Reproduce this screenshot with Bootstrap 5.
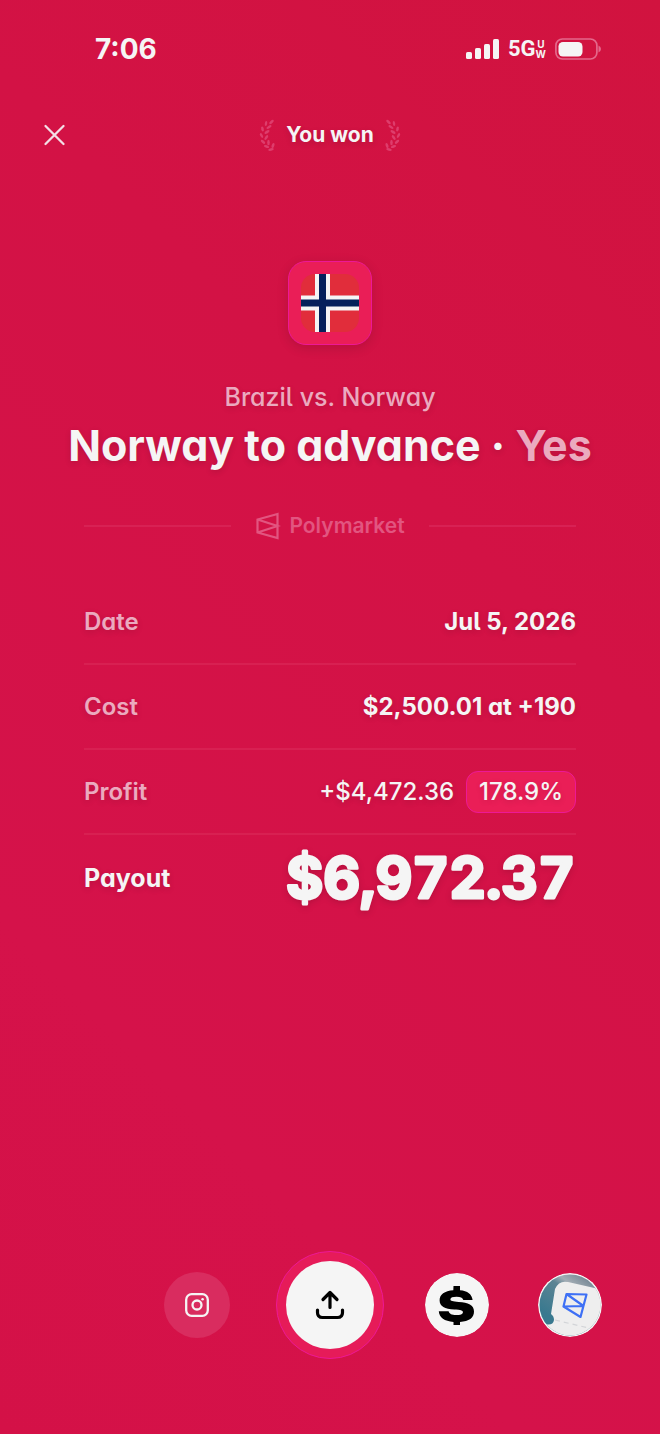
<!DOCTYPE html>
<html lang="en">
<head>
<meta charset="utf-8">
<meta name="viewport" content="width=device-width, initial-scale=1">
<title>You won</title>
<link href="https://cdn.jsdelivr.net/npm/bootstrap@5.3.0/dist/css/bootstrap.min.css" rel="stylesheet">
<style>
:root { --paper: #f5f5f5; --soft: #ebaabf; --hot: #ea1e57; --edge: #ed1896; }
body {
  font-family: Inter, "Liberation Sans", sans-serif;
  color: var(--paper);
  background: linear-gradient(225deg, #d1133f 0%, #d31245 35%, #d5124a 75%, #d41147 100%) no-repeat;
  font-size: 24px; line-height: 32px;
}
svg { display: block; flex: none; }
.alt-a { font-feature-settings: "cv11", "cv05"; }
.status-bar { padding: 33px 58px 0 95px; }
.clock { font-size: 28px; }
.network { font-size: 22px; font-family: "Roboto", Inter, sans-serif; }
.network-sub { font-size: 10px; line-height: 10px; }
.top-bar { grid-template-columns: 1fr auto 1fr; padding: 53px 40px 0; }
.close-btn { width: 28px; height: 28px; }
.bare { background: none; border: 0; padding: 0; color: inherit; }
.won { gap: 11px; }
.won-title { font-size: 21px; }
.flag-tile {
  width: 84px; height: 84px; border-radius: 18px; background: var(--hot);
  border: 1px solid var(--edge); margin-top: 109px; box-shadow: 0 3px 12px #0002;
}
.flag-tile svg { border-radius: 14px; }
.shade { text-shadow: 0 2px 6px #0002; }
.soft { color: var(--soft); }
.match-name { font-size: 25px; margin-top: 36px; }
.headline { font-size: 43px; line-height: 56px; margin: 4px 0 0; }
.receipt { padding: 0 84px; }
.brand-row { margin-top: 37px; gap: 24px; color: #e25580; font-size: 21px; }
.rule { height: 2px; background: #d82154; }
.receipt-list { padding-top: 38px; }
.receipt-row { min-height: 85px; border-bottom: 2px solid #d82052; margin: 0; }
.receipt-row:last-child { border-bottom: 0; }
.receipt-row dt { font-weight: 600; }
.receipt-row .payout-label { font-size: 25px; font-weight: 700; }
.profit-pill {
  background: var(--hot); border: 1px solid var(--edge); border-radius: 12px;
  padding: 4px 12px; margin-left: 12px;
}
.payout-sum { font-size: 57px; font-weight: 700; font-feature-settings: "tnum"; text-shadow: none; overflow: visible; filter: drop-shadow(0 2px 3px #0002); }
.dock { grid-template-columns: 1fr auto 1fr; padding-bottom: 75px; }
.dock-start { padding-right: 46px; }
.dock-end { padding: 0 58px 0 41px; }
.dock button { border-radius: 50%; }
.ig-btn { width: 66px; height: 66px; background: #d92c5f; }
.share-btn { width: 108px; height: 108px; background: #e61b59; border: 1px solid var(--edge); }
.share-disc { width: 88px; height: 88px; background: var(--paper); color: #000; }
.coin-btn { width: 64px; height: 64px; overflow: hidden; }
</style>
</head>
<body class="min-vh-100 d-flex flex-column">

<header>
  <div class="status-bar d-flex justify-content-between align-items-center">
    <span class="clock fw-bold">7:06</span>
    <div class="d-flex align-items-center">
      <svg width="34" height="22" viewBox="0 0 34 22" fill="#f5f5f5"><rect y="14" width="6" height="7" rx="1.6"/><rect x="9" y="10" width="6" height="11" rx="1.6"/><rect x="18" y="6" width="6" height="15" rx="1.6"/><rect x="27" y="1" width="6" height="20" rx="1.6"/></svg>
      <span class="network fw-bold ms-2">5G</span>
      <span class="network-sub fw-bold d-flex flex-column align-items-center me-2">
        <span>U</span><span>W</span>
      </span>
      <svg width="48" height="24" viewBox="0 0 48 24"><rect x="1.900" y="2" width="41" height="20" rx="6.500" fill="none" stroke="#e4688b" stroke-width="1.700"/><rect x="4.500" y="5" width="24" height="14.500" rx="4.500" fill="#f5f5f5"/><path d="M44.500 8.500q2.500 1.200 2.500 3.500t-2.500 3.500z" fill="#e4688b"/></svg>
    </div>
  </div>

  <div class="top-bar d-grid align-items-center">
    <button class="bare close-btn" type="button" aria-label="Close">
      <svg width="28" height="28" viewBox="0 0 28 28" stroke="#f3dfe6" stroke-width="2.300" stroke-linecap="round"><path d="M5.500 5 23.500 23M23.500 5 5.500 23"/></svg>
    </button>
    <div class="won d-flex align-items-center">
      <svg width="16" height="34" viewBox="0 0 16 34" fill="#de3d6c">
        <defs><g id="laurel">
          <ellipse cx="12.500" cy="4" rx="2.900" ry="1.300" transform="rotate(-45 12.500 4)"/>
          <ellipse cx="7" cy="5.500" rx="2.500" ry="1.200" transform="rotate(-80 7 5.500)"/>
          <ellipse cx="10" cy="9" rx="2.900" ry="1.300" transform="rotate(-32 10 9)"/>
          <ellipse cx="3.500" cy="11" rx="2.600" ry="1.300" transform="rotate(78 3.500 11)"/>
          <ellipse cx="8" cy="14" rx="2.800" ry="1.300" transform="rotate(-30 8 14)"/>
          <ellipse cx="2.500" cy="17.500" rx="2.600" ry="1.300" transform="rotate(62 2.500 17.500)"/>
          <ellipse cx="7.300" cy="19.500" rx="2.800" ry="1.300" transform="rotate(-55 7.300 19.500)"/>
          <ellipse cx="4" cy="23.800" rx="2.700" ry="1.300" transform="rotate(42 4 23.800)"/>
          <ellipse cx="9.500" cy="24.500" rx="2.700" ry="1.300" transform="rotate(-90 9.500 24.500)"/>
          <ellipse cx="14" cy="27.500" rx="2.700" ry="1.300" transform="rotate(-72 14 27.500)"/>
          <ellipse cx="7.500" cy="28.500" rx="2.700" ry="1.300" transform="rotate(20 7.500 28.500)"/>
          <ellipse cx="12" cy="31.500" rx="2.800" ry="1.300" transform="rotate(-10 12 31.500)"/>
        </g></defs>
        <use href="#laurel"/>
      </svg>
      <span class="won-title fw-bold shade">You won</span>
      <svg width="16" height="34" viewBox="0 0 16 34" fill="#de3d6c"><use href="#laurel" transform="matrix(-1 0 0 1 16 0)"/></svg>
    </div>
  </div>
</header>

<main>
  <div class="text-center">
    <div class="flag-tile mx-auto d-flex align-items-center justify-content-center">
      <svg width="58" height="58" viewBox="0 0 58 58" role="img" aria-label="Norway"><rect width="58" height="58" fill="#e12d3b"/><path d="M14 0h15v58H14zM0 21.500h58v15H0z" fill="#f5f5f5"/><path d="M18 0h7v58h-7zM0 25.500h58v7H0z" fill="#05205b"/></svg>
    </div>
    <p class="match-name alt-a shade soft fw-medium mb-0">Brazil vs. Norway</p>
    <h1 class="headline alt-a shade fw-bold">Norway to advance · <span class="soft">Yes</span></h1>
  </div>

  <div class="receipt">
    <div class="brand-row d-flex align-items-center fw-semibold">
      <span class="rule flex-grow-1"></span>
      <span class="d-flex align-items-center gap-2">
        <svg width="26" height="28" viewBox="0 0 26 28" fill="none" stroke="currentColor" stroke-width="2.200"><path d="M22.500 2 2.500 7.500v13L22.500 26zM2.500 7.500 22.500 14 2.500 20.500"/></svg>
        Polymarket
      </span>
      <span class="rule flex-grow-1"></span>
    </div>

    <dl class="receipt-list alt-a shade mb-0">
      <div class="receipt-row d-flex align-items-center justify-content-between">
        <dt class="soft">Date</dt><dd class="mb-0 fw-bold">Jul 5, 2026</dd>
      </div>
      <div class="receipt-row d-flex align-items-center justify-content-between">
        <dt class="soft">Cost</dt><dd class="mb-0 fw-bold">$2,500.01 at +190</dd>
      </div>
      <div class="receipt-row d-flex align-items-center justify-content-between">
        <dt class="soft">Profit</dt>
        <dd class="mb-0 d-flex align-items-center fw-medium">+$4,472.36 <span class="profit-pill">178.9%</span></dd>
      </div>
      <div class="receipt-row d-flex align-items-center justify-content-between">
        <dt class="payout-label">Payout</dt>
        <dd class="mb-0">
          <svg class="payout-sum" width="300" height="64" viewBox="0 0 300 64"><text x="299" y="52" text-anchor="end" fill="#f5f5f5" stroke="#f5f5f5" stroke-width="3" stroke-linejoin="round">$6,972.37</text></svg>
        </dd>
      </div>
    </dl>
  </div>
</main>

<footer class="dock d-grid align-items-center mt-auto">
  <div class="dock-start d-flex justify-content-end">
    <button class="bare ig-btn d-flex align-items-center justify-content-center" type="button" aria-label="Share to Instagram">
      <svg width="24" height="24" viewBox="0 0 24 24" fill="none" stroke="#f5f5f5" stroke-width="2.300"><rect x="1.200" y="1.200" width="21.600" height="21.600" rx="5.500"/><circle cx="12" cy="12" r="4.500"/><circle cx="17.600" cy="6.300" r="1.300" fill="#f5f5f5" stroke="none"/></svg>
    </button>
  </div>
  <button class="share-btn p-0 d-flex align-items-center justify-content-center" type="button" aria-label="Share">
    <span class="share-disc rounded-circle d-flex align-items-center justify-content-center">
      <svg width="30" height="30" viewBox="0 0 30 30" fill="none" stroke="#000" stroke-width="3.200" stroke-linecap="round" stroke-linejoin="round"><path d="M15 17.500V2.500M8 9.500l7-7 7 7M2.500 20v2.500q0 5 5 5h15q5 0 5-5V20"/></svg>
    </span>
  </button>
  <div class="dock-end d-flex justify-content-between">
    <button class="bare coin-btn" type="button" aria-label="Cash">
      <svg width="64" height="64" viewBox="0 0 64 64"><circle cx="32" cy="32" r="32" fill="#f5f5f5"/><path d="M28.500 13h6.500v4.200c7.500.6 12 4 12.600 9.800h-9.300c-.7-2.400-2.800-3.200-6.700-3.200-4 0-6.200.8-6.200 2.500 0 1.900 2.300 2.200 8.300 2.600 9.500.6 15.300 2.800 15.300 9.600 0 6.500-5 9.800-14 10.400V52h-6.500v-3.100c-9-.6-14.300-4.100-14.700-10.600h9.800c.9 2.600 3 3.800 7.500 3.800 4.200 0 6.800-.8 6.800-2.800s-2.100-2.400-8.500-2.800c-9.700-.6-14.800-2.900-14.800-9.300 0-5.800 5-9.400 13.700-10z"/></svg>
    </button>
    <button class="bare coin-btn" type="button" aria-label="Polymarket profile">
      <svg width="64" height="64" viewBox="0 0 64 64">
        <defs>
          <clipPath id="disc"><circle cx="32" cy="32" r="30.500"/></clipPath>
          <linearGradient id="sky" x1="0" y1="1" x2=".7" y2="0"><stop offset=".3" stop-color="#39798f"/><stop offset=".7" stop-color="#5c8494"/><stop offset=".8" stop-color="#a3adb5"/><stop offset="1" stop-color="#708390"/></linearGradient>
        </defs>
        <circle cx="32" cy="32" r="32" fill="#f5f5f5"/>
        <g clip-path="url(#disc)">
          <rect width="64" height="64" fill="url(#sky)"/>
          <path d="M17 16q4-9 13-7l40 9v50H0L7 51q8 2 9-4 0-4-3-6z" fill="#eee"/>
          <path d="m17 47 38 9" stroke="#d3d5d8" stroke-width="1.200" stroke-dasharray="5 4"/>
        </g>
        <path d="M28.500 21 48.500 21.500 42.500 44 25.500 33.500zM28.500 21 45.500 33 25.500 33.500" fill="none" stroke="#3e70f5" stroke-width="2.200" stroke-linejoin="round"/>
      </svg>
    </button>
  </div>
</footer>

<script src="https://cdn.jsdelivr.net/npm/bootstrap@5.3.0/dist/js/bootstrap.bundle.min.js"></script>
</body>
</html>
